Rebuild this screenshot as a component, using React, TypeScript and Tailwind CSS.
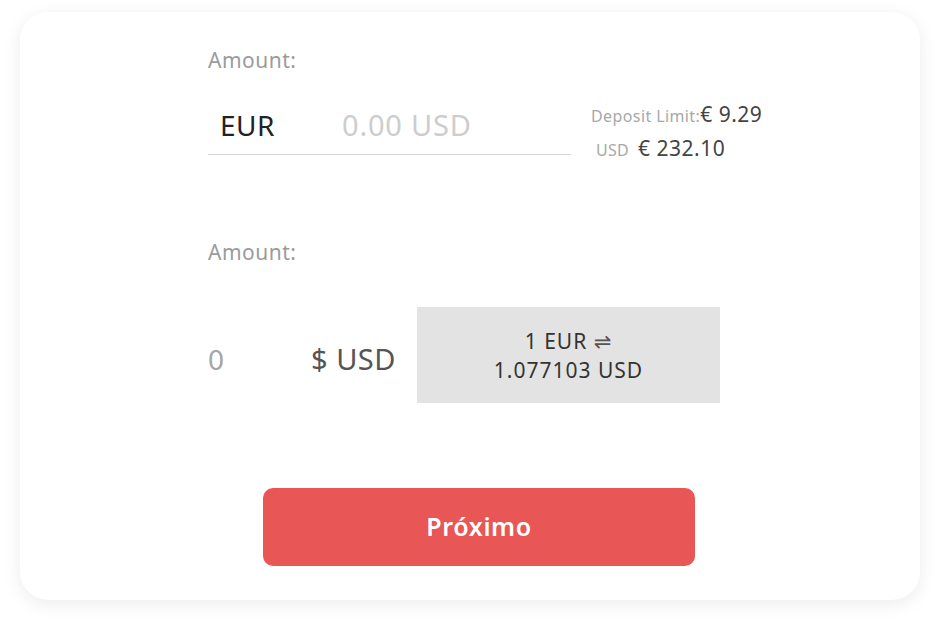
import React, { useState } from 'react';

const App = () => {
    const [amount, setAmount] = useState<string>('');

    return (
        <div className="w-[940px] h-[628px] bg-white pt-3 px-5 font-['Noto_Sans',sans-serif]">
            <div className="w-[900px] h-[588px] bg-white rounded-[28px] shadow-[0_4px_18px_rgba(0,0,0,0.08)] pt-[34px] pl-[188px] flex flex-col">
                <p className="text-[21px] leading-7 tracking-[0.5px] text-[#9b9b9b]">Amount:</p>

                <div className="flex items-start mt-[30px]">
                    <div className="w-[363px] h-[51px] border-b border-[#d5d9d9] flex items-center pl-3 pb-2">
                        <span className="text-[28px] tracking-[0.5px] text-[#222] w-[122px]">EUR</span>
                        <input
                            value={amount}
                            onChange={(e) => setAmount(e.target.value)}
                            placeholder="0.00 USD"
                            className="w-[220px] text-[29px] tracking-[0.8px] text-[#222] placeholder:text-[#cdcdcd] outline-none bg-transparent"
                        />
                    </div>
                    <div className="ml-5 mt-[-5px] flex flex-col gap-[2px]">
                        <p className="flex items-baseline">
                            <span className="text-[16px] tracking-[0.4px] text-[#a8a8a8]">Deposit Limit:</span>
                            <span className="text-[21px] tracking-[0.5px] text-[#444]">€ 9.29</span>
                        </p>
                        <p className="flex items-baseline pl-[5px]">
                            <span className="text-[16px] tracking-[0.3px] text-[#a8a8a8] mr-[9px]">USD</span>
                            <span className="text-[21px] tracking-[0.5px] text-[#444]">€ 232.10</span>
                        </p>
                    </div>
                </div>

                <p className="text-[21px] leading-7 tracking-[0.5px] text-[#9b9b9b] mt-[74px]">Amount:</p>

                <div className="flex items-center mt-[41px]">
                    <span className="text-[28px] text-[#a5a5a5] w-[103px] mt-2">0</span>
                    <span className="text-[29px] tracking-[0.5px] text-[#555] w-[106px] mt-2">$ USD</span>
                    <div className="w-[303px] h-[96px] bg-[#e3e3e3] flex flex-col items-center justify-center text-[21px] leading-7 tracking-[1px] text-[#333]">
                        <span>
                            1 EUR <span className="font-['DejaVu_Sans',sans-serif] text-[#555]">⇌</span>
                        </span>
                        <span>1.077103 USD</span>
                    </div>
                </div>

                <button className="ml-[55px] mt-[85px] w-[432px] h-[78px] rounded-[10px] bg-[#e85656] text-white text-[25px] font-semibold tracking-wide">
                    Próximo
                </button>
            </div>
        </div>
    );
};

export default App;
